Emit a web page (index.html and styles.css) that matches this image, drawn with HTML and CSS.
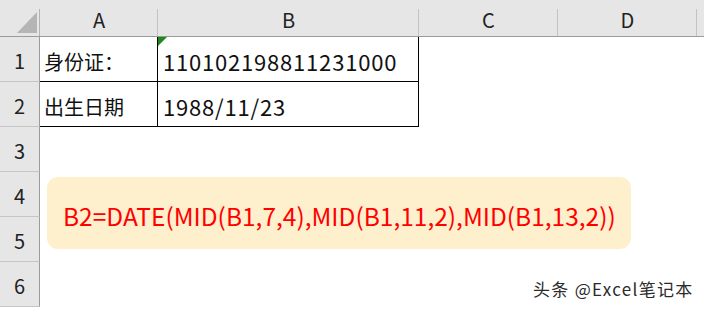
FILE: index.html
```html
<!DOCTYPE html>
<html lang="zh">
<head>
<meta charset="utf-8">
<link rel="stylesheet" href="styles.css">
</head>
<body>
<div class="sheet">
  <div class="corner"><span class="tri"></span></div>
  <div class="colh">A</div>
  <div class="colh">B</div>
  <div class="colh">C</div>
  <div class="colh">D</div>
  <div class="colh last"></div>

  <div class="rowh">1</div>
  <div class="cell ta">身份证：</div>
  <div class="cell tb green">110102198811231000</div>
  <div class="cell"></div><div class="cell"></div><div class="cell"></div>

  <div class="rowh">2</div>
  <div class="cell ta">出生日期</div>
  <div class="cell tb">1988/11/23</div>
  <div class="cell"></div><div class="cell"></div><div class="cell"></div>

  <div class="rowh">3</div><div class="cell"></div><div class="cell"></div><div class="cell"></div><div class="cell"></div><div class="cell"></div>
  <div class="rowh">4</div><div class="cell"></div><div class="cell"></div><div class="cell"></div><div class="cell"></div><div class="cell"></div>
  <div class="rowh">5</div><div class="cell"></div><div class="cell"></div><div class="cell"></div><div class="cell"></div><div class="cell"></div>
  <div class="rowh">6</div><div class="cell"></div><div class="cell"></div><div class="cell"></div><div class="cell"></div><div class="cell"></div>

  <div class="formula">B2=DATE(MID(B1,7,4),MID(B1,11,2),MID(B1,13,2))</div>
  <div class="mark">头条 @Excel笔记本</div>
</div>
</body>
</html>
```
FILE: styles.css
```css
html, body {
  margin: 0;
  padding: 0;
  background: #ffffff;
}
.sheet {
  position: relative;
  width: 704px;
  height: 309px;
  overflow: hidden;
  display: grid;
  grid-template-columns: 40px 118px 261px 139px 139px 1fr;
  grid-template-rows: 37px repeat(6, 45px);
  font-family: "Noto Sans CJK SC", "Noto Sans", sans-serif;
}
.sheet > div {
  box-sizing: border-box;
}
.corner {
  background: #e6e6e6;
  border-bottom: 1px solid #9b9b9b;
  position: relative;
}
.corner::after {
  content: "";
  position: absolute;
  right: 0;
  top: 9px;
  bottom: 0;
  width: 1px;
  background: #b4b4b4;
}
.tri {
  position: absolute;
  left: 17px;
  top: 12px;
  width: 0;
  height: 0;
  border-left: 20px solid transparent;
  border-bottom: 21px solid #b5b5b5;
}
.colh {
  background: #e6e6e6;
  border-bottom: 1px solid #9b9b9b;
  position: relative;
  display: flex;
  align-items: flex-end;
  justify-content: center;
  font-size: 20px;
  line-height: 28px;
  padding-bottom: 2px;
  color: #222;
}
.colh::after {
  content: "";
  position: absolute;
  right: 0;
  top: 9px;
  bottom: 0;
  width: 1px;
  background: #c3c3c3;
}
.colh.last::after {
  display: none;
}
.rowh {
  background: #e6e6e6;
  border-right: 1px solid #9b9b9b;
  border-bottom: 1px solid #c6c6c6;
  display: flex;
  align-items: center;
  justify-content: center;
  font-size: 20px;
  color: #222;
  padding-top: 3px;
}
.cell {
  display: flex;
  align-items: center;
  font-size: 22px;
  color: #111;
  white-space: nowrap;
  padding-left: 4px;
  padding-top: 4px;
  position: relative;
}
.ta {
  border-right: 1px solid #000;
  border-bottom: 1px solid #000;
  font-size: 20px;
  padding-top: 5px;
}
.tb {
  border-right: 1px solid #000;
  border-bottom: 1px solid #000;
  padding-left: 5px;
  letter-spacing: 0.8px;
}
.green::before {
  content: "";
  position: absolute;
  left: 0;
  top: 0;
  border-top: 9px solid #1e8a1e;
  border-right: 9px solid transparent;
}
.formula {
  position: absolute;
  left: 47px;
  top: 177px;
  width: 584px;
  height: 72px;
  background: #fff0cd;
  border-radius: 11px;
  color: #ff0000;
  font-size: 24.5px;
  display: flex;
  align-items: center;
  padding-left: 16px;
  padding-top: 4px;
  box-sizing: border-box;
  white-space: nowrap;
}
.mark {
  position: absolute;
  left: 533px;
  top: 276px;
  font-size: 17px;
  letter-spacing: 1.3px;
  color: #2b2b2b;
  white-space: nowrap;
  text-shadow: 1px 1px 0 #fff, -1px -1px 0 #fff;
  font-family: "Noto Sans CJK SC", "Liberation Sans", sans-serif;
}
```
